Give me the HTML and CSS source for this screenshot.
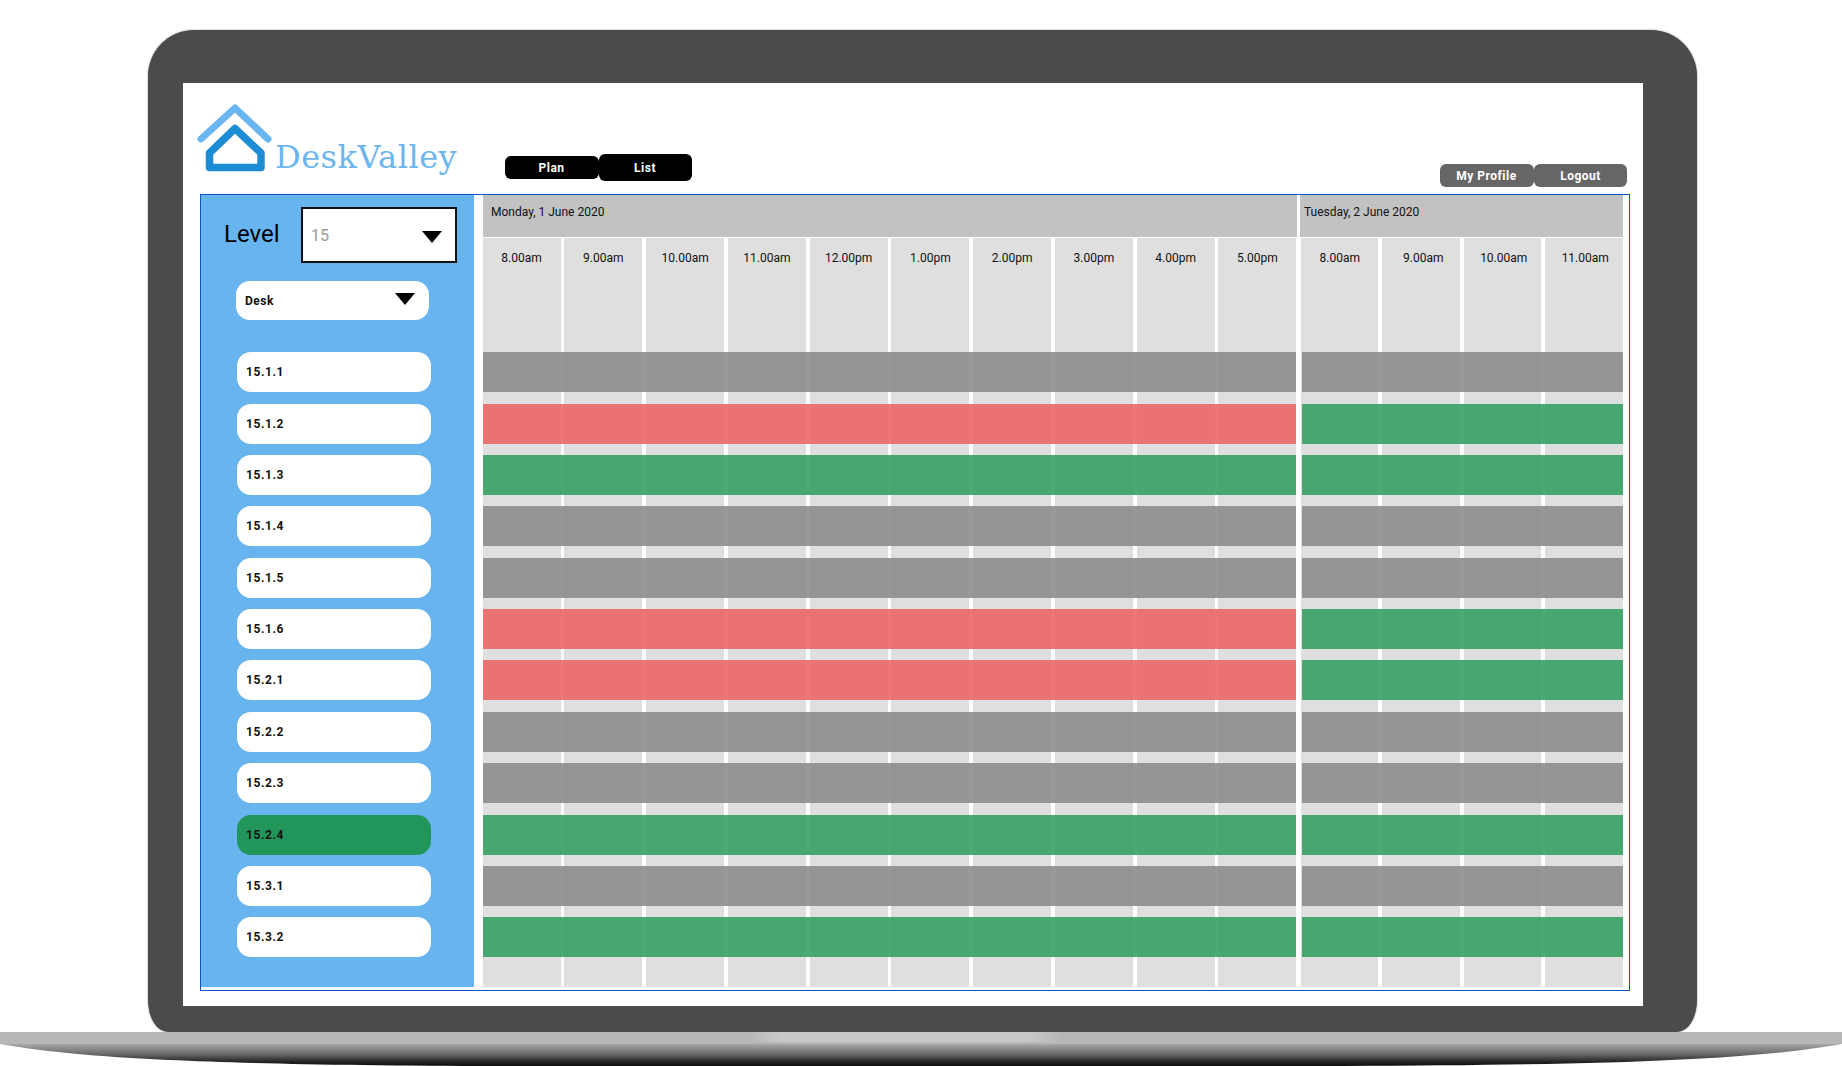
FILE: index.html
```html
<!DOCTYPE html>
<html lang="en">
<head>
<meta charset="utf-8">
<title>DeskValley</title>
<link rel="stylesheet" href="styles.css">
</head>
<body>
<div class="laptop">
  <div class="bezel">
    <div class="screen">
      <header class="topbar">
        <div class="logo">
          <svg class="logo-icon" viewBox="0 0 76 70" width="76" height="70" aria-hidden="true">
            <path class="roof" d="M4 34 L38 3 L71 34"/>
            <path class="house" d="M12.500 48 L38 23.500 L64 48 L64 62.500 L12.500 62.500 Z"/>
          </svg>
          <span class="logo-text">DeskValley</span>
        </div>
        <div class="tabs">
          <button class="tab">Plan</button>
          <button class="tab tab-active">List</button>
        </div>
        <div class="user-actions">
          <button class="action">My Profile</button>
          <button class="action">Logout</button>
        </div>
      </header>
      <main class="frame">
        <aside class="sidebar">
          <div class="level">
            <span class="level-label">Level</span>
            <div class="level-select"><span>15</span><i class="caret"></i></div>
          </div>
          <div class="desk-select"><span>Desk</span><i class="caret"></i></div>
          <ul class="desks">
            <li class="desk">15.1.1</li>
            <li class="desk">15.1.2</li>
            <li class="desk">15.1.3</li>
            <li class="desk">15.1.4</li>
            <li class="desk">15.1.5</li>
            <li class="desk">15.1.6</li>
            <li class="desk">15.2.1</li>
            <li class="desk">15.2.2</li>
            <li class="desk">15.2.3</li>
            <li class="desk desk-selected">15.2.4</li>
            <li class="desk">15.3.1</li>
            <li class="desk">15.3.2</li>
          </ul>
        </aside>
        <section class="schedule">
          <div class="day day-mon">
            <div class="day-title">Monday, 1 June 2020</div>
            <div class="day-body">
              <div class="slots">
                <div class="slot">8.00am</div>
                <div class="slot">9.00am</div>
                <div class="slot">10.00am</div>
                <div class="slot">11.00am</div>
                <div class="slot">12.00pm</div>
                <div class="slot">1.00pm</div>
                <div class="slot">2.00pm</div>
                <div class="slot">3.00pm</div>
                <div class="slot">4.00pm</div>
                <div class="slot">5.00pm</div>
              </div>
              <div class="bars">
                <div class="bar grey"></div>
                <div class="bar red"></div>
                <div class="bar green"></div>
                <div class="bar grey"></div>
                <div class="bar grey"></div>
                <div class="bar red"></div>
                <div class="bar red"></div>
                <div class="bar grey"></div>
                <div class="bar grey"></div>
                <div class="bar green"></div>
                <div class="bar grey"></div>
                <div class="bar green"></div>
              </div>
            </div>
          </div>
          <div class="day day-tue">
            <div class="day-title">Tuesday, 2 June 2020</div>
            <div class="day-body">
              <div class="slots">
                <div class="slot">8.00am</div>
                <div class="slot">9.00am</div>
                <div class="slot">10.00am</div>
                <div class="slot">11.00am</div>
              </div>
              <div class="bars">
                <div class="bar grey"></div>
                <div class="bar green"></div>
                <div class="bar green"></div>
                <div class="bar grey"></div>
                <div class="bar grey"></div>
                <div class="bar green"></div>
                <div class="bar green"></div>
                <div class="bar grey"></div>
                <div class="bar grey"></div>
                <div class="bar green"></div>
                <div class="bar grey"></div>
                <div class="bar green"></div>
              </div>
            </div>
          </div>
        </section>
      </main>
    </div>
  </div>
  <svg class="base" viewBox="0 0 1842 34" width="1842" height="34" aria-hidden="true">
    <defs>
      <linearGradient id="baseShade" x1="0" y1="0" x2="0" y2="1">
        <stop offset="0" stop-color="#a8a8a8"/>
        <stop offset="0.45" stop-color="#6a6a6a"/>
        <stop offset="0.8" stop-color="#262626"/>
        <stop offset="1" stop-color="#0a0a0a"/>
      </linearGradient>
      <linearGradient id="notch" x1="0" y1="0" x2="1" y2="0">
        <stop offset="0" stop-color="#b9b9b9"/>
        <stop offset="0.1" stop-color="#c9c9cb"/>
        <stop offset="0.9" stop-color="#c9c9cb"/>
        <stop offset="1" stop-color="#b9b9b9"/>
      </linearGradient>
    </defs>
    <path fill="url(#baseShade)" d="M0 12 C80 26 200 33 500 34 L1342 34 C1642 33 1762 26 1842 12 Z"/>
    <rect width="1842" height="12" fill="#b7b7b7"/>
    <rect x="752" width="306" height="10" fill="url(#notch)"/>
  </svg>
</div>
</body>
</html>
```
FILE: styles.css
```css
* { box-sizing: border-box; }
html, body { margin: 0; background: #fff; }
body { font-family: Roboto, "Liberation Sans", sans-serif; color: #111; width: 1842px; height: 1066px; overflow: hidden; }

.laptop { padding-top: 30px; }
.bezel {
  width: 1549px;
  height: 1002px;
  margin-left: 148px;
  padding: 53px 54px 26px 35px;
  background: #4b4b4b;
  border-radius: 46px 46px 20px 20px / 46px 46px 32px 32px;
  box-shadow: 0 0 2px #8a8a8a;
}
.screen { height: 923px; background: #fff; padding: 0 13px 0 17px; }
.base { display: block; }

.topbar { height: 111px; display: flex; }
.logo { width: 305px; display: flex; align-items: flex-start; }
.logo-icon { flex: none; margin: 22px 0 0 -3px; overflow: visible; }
.roof { fill: none; stroke: #6ab6f2; stroke-width: 7; stroke-linecap: round; stroke-linejoin: round; }
.house { fill: none; stroke: #1c8cd4; stroke-width: 7.500; stroke-linejoin: round; }
.logo-text {
  margin: 54px 0 0 2px;
  font-family: "DejaVu Serif", "Liberation Serif", serif;
  font-size: 32px;
  line-height: 40px;
  letter-spacing: 0.5px;
  color: #6cb6f0;
}
.tabs { display: flex; align-items: center; height: 27px; margin-top: 71px; }
.tab, .action {
  border: 0;
  padding: 0 1px 0 0;
  font-family: Roboto, "Liberation Sans", sans-serif;
  font-weight: 700;
  font-size: 12px;
  letter-spacing: 0.5px;
  color: #fff;
  border-radius: 6px;
}
.tab { background: #000; width: 94px; height: 23px; }
.tab-active { height: 27px; width: 93px; }
.user-actions { display: flex; margin-left: auto; margin-top: 81px; height: 23px; margin-right: 3px; }
.action { background: #666; width: 94px; height: 23px; }
.action + .action { width: 93px; padding: 0; }

.frame {
  display: flex;
  height: 797px;
  border: 1px solid #0b55c0;
  padding-bottom: 3px;
}

.sidebar { width: 273px; background: #68b4ee; flex: none; }
.level { display: flex; align-items: center; margin: 12px 0 0 23px; height: 56px; }
.level-label { font-size: 24px; width: 77px; line-height: 28px; color: #000; margin-top: -2px; }
.level-select {
  width: 156px;
  height: 56px;
  border: 2px solid #111;
  background: #fff;
  display: flex;
  align-items: center;
  justify-content: space-between;
  padding: 0 13px 0 8px;
  font-size: 16px;
  color: #9a9a9a;
}
.caret {
  display: block;
  width: 0;
  height: 0;
  border-left: 10px solid transparent;
  border-right: 10px solid transparent;
  border-top: 12px solid #000;
}
.level-select .caret { margin-top: 4px; }
.desk-select {
  width: 193px;
  height: 39px;
  margin: 18px 0 0 35px;
  padding: 0 14px 0 9px;
  background: #fff;
  border-radius: 14px;
  display: flex;
  align-items: center;
  justify-content: space-between;
  font-weight: 700;
  font-size: 12px;
  letter-spacing: 0.5px;
}
.desk-select .caret { margin-top: -4px; }
.desks {
  list-style: none;
  margin: 32.300px 0 0 36px;
  padding: 0;
  width: 194px;
  display: flex;
  flex-direction: column;
  gap: 11.360px;
}
.desk {
  height: 40px;
  line-height: 41px;
  padding-left: 9px;
  background: #fff;
  border-radius: 14px;
  font-weight: 700;
  font-size: 12px;
  letter-spacing: 0.6px;
}
.desk-selected { background: #22965a; }

.schedule { display: flex; margin-left: 8.600px; gap: 3px; flex: none; }
.day-mon { width: 814.400px; }
.day-tue { width: 323px; }
.day { display: flex; flex-direction: column; }
.day-title {
  height: 42px;
  background: #c2c2c2;
  padding: 10px 0 0 8.400px;
  font-size: 12px;
  line-height: 14px;
}
.day-tue .day-title { padding-left: 4px; }
.day-body { display: grid; flex: 1; margin-top: 1px; }
.slots, .bars { grid-area: 1 / 1; }
.slots { display: flex; gap: 3.750px; }
.day-tue .slots { padding-left: 1px; gap: 4px; }
.slot {
  width: 78px;
  background: #dfdfdf;
  text-align: center;
  font-size: 12px;
  line-height: 14px;
  padding-top: 13px;
}
.day-tue .slot { width: 77.500px; }
.day-tue .slot:nth-child(2) { padding-left: 4px; }
.day-tue .slot:nth-child(3) { padding-left: 2px; }
.day-tue .slot:nth-child(4) { padding-left: 2px; }
.bars {
  display: flex;
  flex-direction: column;
  gap: 11.360px;
  padding: 114.300px 1px 0 0;
}
.day-tue .bars { padding: 114.300px 0 0 2px; }
.bar { height: 40px; opacity: 0.9; }
.grey { background: #8d8d8d; }
.red { background: #eb6666; }
.green { background: #37a064; }
```
